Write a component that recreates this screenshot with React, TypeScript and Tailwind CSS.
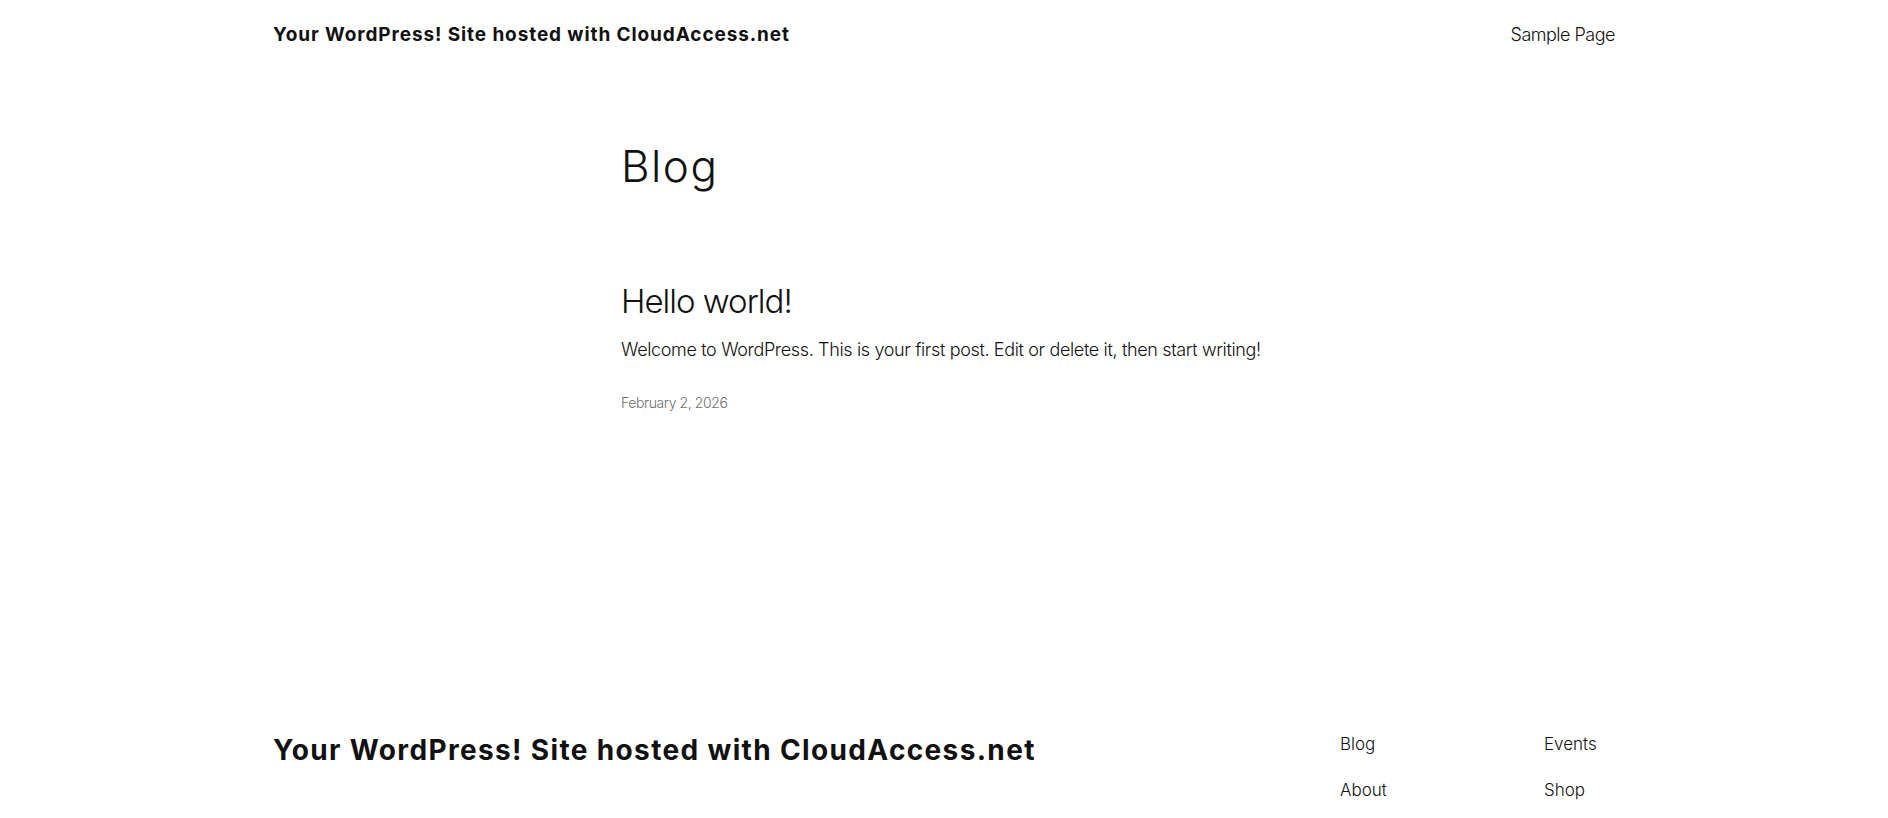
const font = { fontFamily: "Inter, 'Noto Sans', sans-serif" };

const footerLinks = [
  ["Blog", "Events"],
  ["About", "Shop"],
];

export default function App() {
  return (
    <div className="min-h-screen bg-white text-[#111111]" style={font}>
      <header className="flex h-[70px] items-center justify-between px-[273px]">
        <a href="#" className="text-[19px] font-bold leading-[28px] tracking-[0.9px]">
          Your WordPress! Site hosted with CloudAccess.net
        </a>
        <nav>
          <a href="#" className="text-[18px] font-light leading-[28px] tracking-[-0.5px]">
            Sample Page
          </a>
        </nav>
      </header>

      <main className="mx-auto w-[646px] pt-[74px] pb-[318px]">
        <h1 className="text-[44px] font-light leading-[44px] tracking-[1.5px]">Blog</h1>
        <article className="mt-[93px]">
          <h2 className="text-[33px] font-light leading-[40px] tracking-[-1px]">
            <a href="#">Hello world!</a>
          </h2>
          <p className="mt-[15px] whitespace-nowrap text-[18px] font-light leading-[28px] tracking-[-0.35px]">
            Welcome to WordPress. This is your first post. Edit or delete it, then start writing!
          </p>
          <p className="mt-[29px] text-[14px] font-light leading-[20px] tracking-[-0.4px] text-[#6f6f6f]">
            February 2, 2026
          </p>
        </article>
      </main>

      <footer className="flex justify-between px-[273px]">
        <p className="mt-[3px] text-[28px] font-bold leading-[32px] tracking-[1.35px]">
          Your WordPress! Site hosted with CloudAccess.net
        </p>
        <div className="flex flex-col gap-[22px] pt-[1px] pb-[40px]">
          {footerLinks.map((row) => (
            <div key={row[0]} className="flex">
              {row.map((label) => (
                <a key={label} href="#" className="w-[204px] text-[17px] font-light leading-[24px] last:w-[71px]">
                  {label}
                </a>
              ))}
            </div>
          ))}
        </div>
      </footer>
    </div>
  );
}
